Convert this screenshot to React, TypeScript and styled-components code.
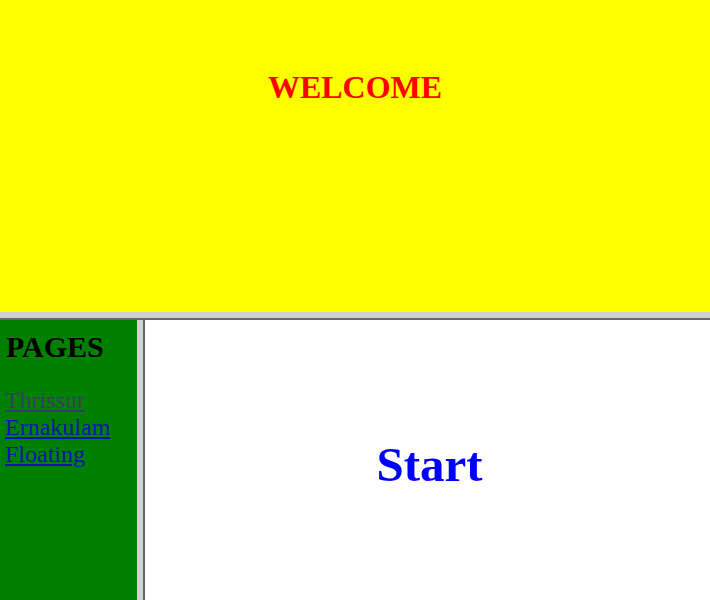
import React from 'react';
import styled, { createGlobalStyle } from 'styled-components';

const GlobalStyle = createGlobalStyle`
	html, body {
		margin: 0;
		padding: 0;
		height: 600px;
		overflow: hidden;
		font-family: 'Liberation Serif', 'Times New Roman', serif;
	}
`;

const Page = styled.div`
	display: flex;
	flex-direction: column;
	width: 710px;
	height: 600px;
`;

const TopFrame = styled.header`
	height: 312px;
	flex-shrink: 0;
	background-color: #ffff00;
	padding-top: 71px;
	box-sizing: border-box;
	text-align: center;
`;

const Welcome = styled.h1`
	margin: 0;
	font-size: 32px;
	line-height: 32px;
	font-weight: bold;
	color: #ff0000;
`;

const RowBorder = styled.div`
	height: 6px;
	flex-shrink: 0;
	background-color: #cfcfcf;
	border-bottom: 2px solid #6b6b6f;
`;

const BottomRow = styled.div`
	flex: 1;
	display: flex;
	min-height: 0;
`;

const Sidebar = styled.nav`
	width: 137px;
	flex-shrink: 0;
	background-color: #008000;
	padding: 12px 0 0 5px;
	box-sizing: border-box;
`;

const SideTitle = styled.h2`
	margin: 0 0 25px 1px;
	font-size: 30px;
	line-height: 30px;
	font-weight: bold;
	color: #000000;
`;

const PageLink = styled.a<{ $visited?: boolean }>`
	display: block;
	font-size: 24px;
	line-height: 27px;
	color: ${(p) => (p.$visited ? '#3c3d66' : '#0a14b4')};
	text-decoration: underline;
`;

const ColBorder = styled.div`
	width: 6px;
	flex-shrink: 0;
	background-color: #d2d2d2;
	border-right: 2px solid #64646c;
`;

const MainFrame = styled.main`
	flex: 1;
	background-color: #ffffff;
	display: flex;
	align-items: center;
	justify-content: center;
	padding: 9px 0 0 4px;
`;

const Start = styled.h1`
	margin: 0;
	font-size: 49px;
	line-height: 48px;
	font-weight: bold;
	color: #0000ff;
`;

const App = () => {
	return (
		<>
			<GlobalStyle />
			<Page>
				<TopFrame>
					<Welcome>WELCOME</Welcome>
				</TopFrame>
				<RowBorder />
				<BottomRow>
					<Sidebar>
						<SideTitle>PAGES</SideTitle>
						<PageLink href='#' $visited>
							Thrissur
						</PageLink>
						<PageLink href='#'>Ernakulam</PageLink>
						<PageLink href='#'>Floating</PageLink>
					</Sidebar>
					<ColBorder />
					<MainFrame>
						<Start>Start</Start>
					</MainFrame>
				</BottomRow>
			</Page>
		</>
	);
};

export default App;
